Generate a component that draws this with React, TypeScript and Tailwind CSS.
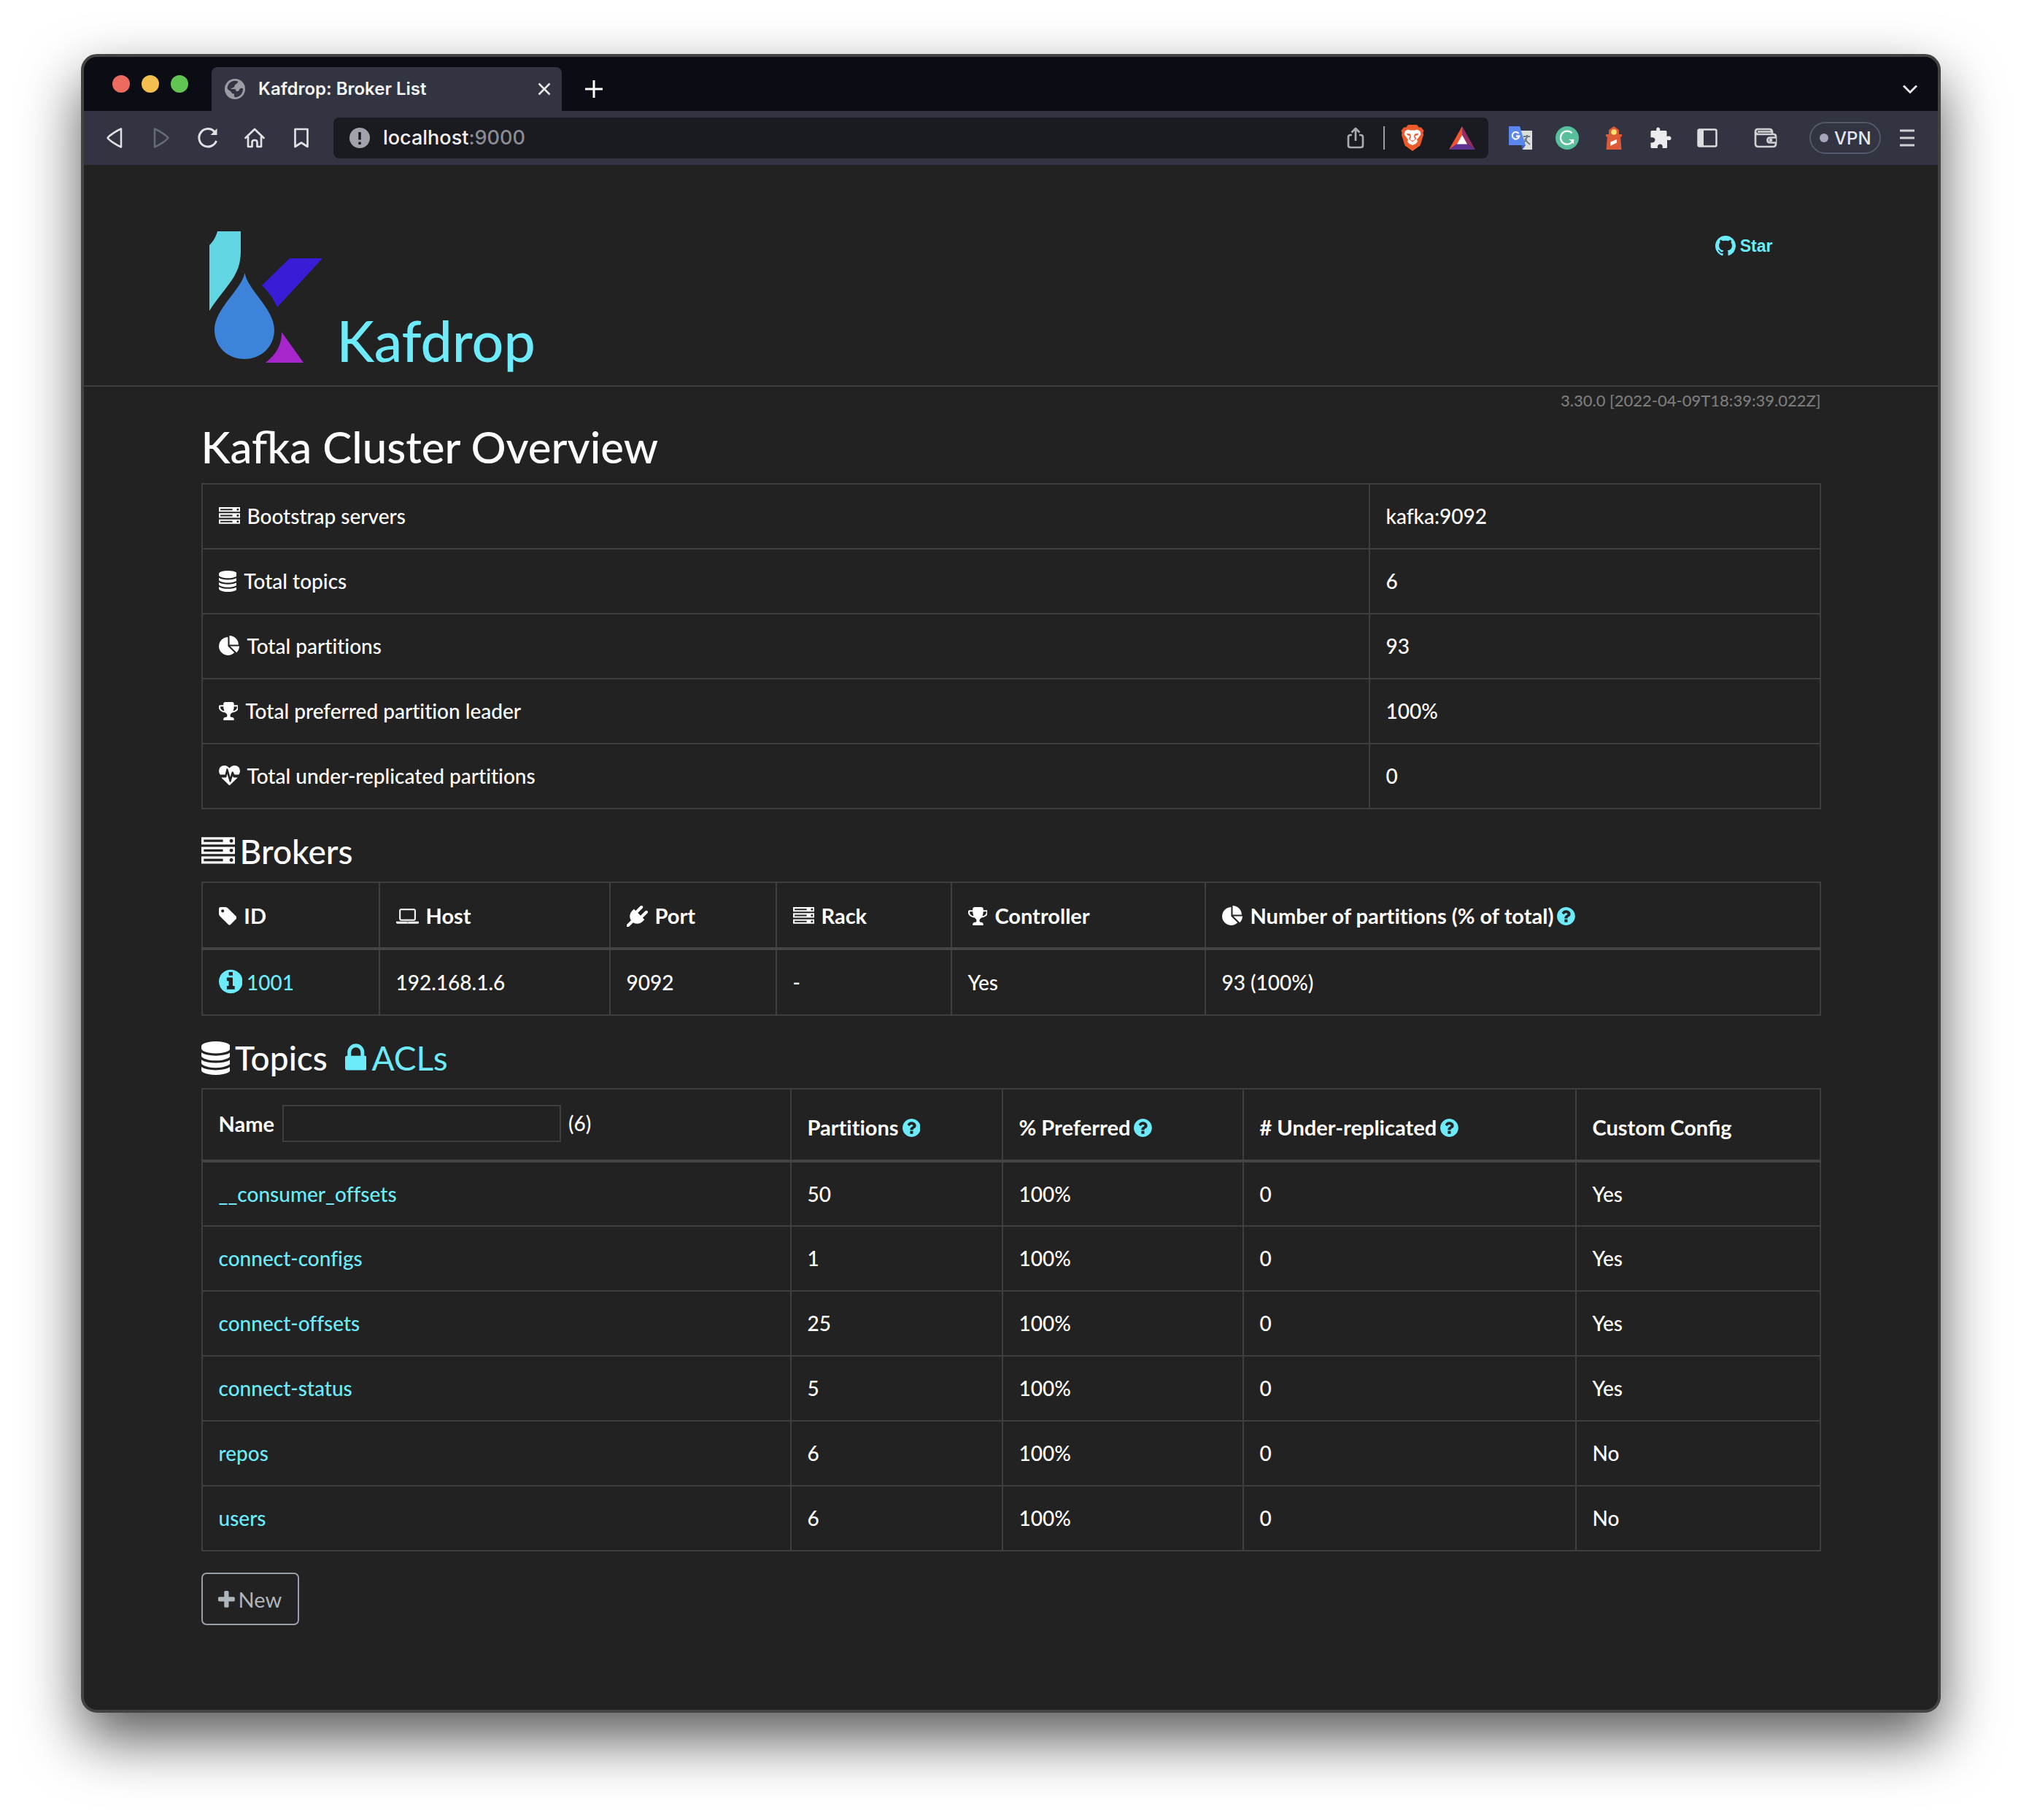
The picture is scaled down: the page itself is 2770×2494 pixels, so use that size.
import React from "react";

const glyphs = {
  server: {
    box: "0 0 1792 1792",
    d: "M128 1408h1024v-128h-1024v128zm0-512h1024v-128h-1024v128zm1568 448q0-40-28-68t-68-28-68 28-28 68 28 68 68 28 68-28 28-68zm-1568-960h1024v-128h-1024v128zm1568 448q0-40-28-68t-68-28-68 28-28 68 28 68 68 28 68-28 28-68zm0-512q0-40-28-68t-68-28-68 28-28 68 28 68 68 28 68-28 28-68zm96 832v384h-1792v-384h1792zm0-512v384h-1792v-384h1792zm0-512v384h-1792v-384h1792z",
  },
  database: {
    box: "128 0 1536 1792",
    d: "M896 768q237 0 443-43t325-127v170q0 69-103 128t-280 93.5-385 34.5-385-34.5-280-93.5-103-128v-170q119 84 325 127t443 43zm0 768q237 0 443-43t325-127v170q0 69-103 128t-280 93.5-385 34.5-385-34.5-280-93.5-103-128v-170q119 84 325 127t443 43zm0-384q237 0 443-43t325-127v170q0 69-103 128t-280 93.5-385 34.5-385-34.5-280-93.5-103-128v-170q119 84 325 127t443 43zm0-1152q208 0 385 34.5t280 93.5 103 128v128q0 69-103 128t-280 93.5-385 34.5-385-34.5-280-93.5-103-128v-128q0-69 103-128t280-93.5 385-34.5z",
  },
  pie: {
    box: "0 0 1792 1792",
    d: "M768 890l546 546q-106 108-247.5 168t-298.5 60q-209 0-385.5-103t-279.5-279.5-103-385.5 103-385.5 279.5-279.5 385.5-103v762zm187 6h773q0 157-60 298.5t-168 247.5zm709-128h-768v-768q209 0 385.5 103t279.5 279.5 103 385.5z",
  },
  trophy: {
    box: "64 0 1664 1792",
    d: "M522 883q-74-162-74-371h-256v96q0 78 94.5 162t235.5 113zm1078-275v-96h-256q0 209-74 371 141-29 235.5-113t94.5-162zm128-128v128q0 71-41.5 143t-112 130-173 97.5-215.5 44.5q-42 54-95 95-38 34-52.5 72.5t-14.5 89.5q0 54 30.5 91t97.5 37q75 0 133.5 45.5t58.5 114.5v64q0 14-9 23t-23 9h-832q-14 0-23-9t-9-23v-64q0-69 58.5-114.5t133.5-45.5q67 0 97.5-37t30.5-91q0-51-14.5-89.5t-52.5-72.5q-53-41-95-95-113-5-215.5-44.5t-173-97.5-112-130-41.5-143v-128q0-40 28-68t68-28h288v-96q0-66 47-113t113-47h576q66 0 113 47t47 113v96h288q40 0 68 28t28 68z",
  },
  heartbeat: {
    box: "0 0 1792 1792",
    d: "M1280 1024h305q-5 6-10 10.5t-9 7.5l-3 4-623 600q-18 18-44 18t-44-18l-624-602q-5-2-21-20h369q22 0 39.5-13.5t22.5-34.5l70-281 190 667q6 20 23 33t39 13q21 0 38-13t23-33l146-485 56 112q18 35 57 35zm512-556q0 145-103 300h-369l-111-221q-8-17-25.5-27t-36.5-8q-45 5-56 46l-129 430-196-686q-6-20-23.5-33t-39.5-13-39 13.5-22 34.5l-116 464h-423q-103-155-103-300 0-220 127-344t351-124q62 0 126.5 21.5t120 58 95.5 68.5 76 68q36-36 76-68t95.5-68.5 120-58 126.5-21.5q224 0 351 124t127 344z",
  },
  tag: {
    box: "128 0 1536 1792",
    d: "M576 448q0-53-37.5-90.5t-90.5-37.5-90.5 37.5-37.5 90.5 37.5 90.5 90.5 37.5 90.5-37.5 37.5-90.5zm1067 576q0 53-37 90l-491 492q-39 37-91 37-53 0-90-37l-715-716q-38-37-64.5-101t-26.5-117v-416q0-52 38-90t90-38h416q53 0 117 26.5t102 64.5l715 714q37 39 37 91z",
  },
  laptop: {
    box: "0 -128 1920 1792",
    d: "M416 1152q-66 0-113-47t-47-113v-704q0-66 47-113t113-47h1088q66 0 113 47t47 113v704q0 66-47 113t-113 47h-1088zm-32-864v704q0 13 9.5 22.5t22.5 9.5h1088q13 0 22.5-9.5t9.5-22.5v-704q0-13-9.5-22.5t-22.5-9.5h-1088q-13 0-22.5 9.5t-9.5 22.5zm1376 928h160v96q0 40-47 68t-113 28h-1600q-66 0-113-28t-47-68v-96h1760zm-720 96q16 0 16-16t-16-16h-160q-16 0-16 16t16 16h160z",
  },
  plug: {
    box: "0 0 1792 1792",
    d: "M1755 453q37 38 37 90.5t-37 90.5l-401 400 150 150-160 160q-163 163-389.5 186.5t-411.5-100.5l-362 362h-181v-181l362-362q-124-185-100.5-411.5t186.5-389.5l160-160 150 150 400-401q38-37 91-37t90 37 37 90.5-37 90.5l-400 401 234 234 401-400q38-37 91-37t90 37z",
  },
  info: {
    box: "128 0 1536 1792",
    d:
      "M1152 1376v-160q0-14-9-23t-23-9h-96v-512q0-14-9-23t-23-9h-320q-14 0-23 9t-9 23v160q0 14 9 23t23 9h96v320h-96q-14 0-23 9t-9 23v160q0 14 9 23t23 9h448q14 0 23-9t9-23zm-128-896v-160q0-14-9-23t-23-9h-192q-14 0-23 9t-9 23v160q0 14 9 23t23 9h192q14 0 23-9t9-23z" +
      "m640 416q0 209-103 385.5t-279.5 279.5-385.5 103-385.5-103-279.5-279.5-103-385.5 103-385.5 279.5-279.5 385.5-103 385.5 103 279.5 279.5 103 385.5z",
  },
  question: {
    box: "128 0 1536 1792",
    d:
      "M1024 1376v-192q0-14-9-23t-23-9h-192q-14 0-23 9t-9 23v192q0 14 9 23t23 9h192q14 0 23-9t9-23zm256-672q0-88-55.5-163t-138.5-116-170-41q-243 0-371 213-15 24 8 42l132 100q7 6 19 6 16 0 25-12 53-68 86-92 34-24 86-24 48 0 85.5 26t37.5 59q0 38-20 61t-68 45q-63 28-115.5 86.5t-52.5 125.5v36q0 14 9 23t23 9h192q14 0 23-9t9-23q0-19 21.5-49.5t54.5-49.5q32-18 49-28.5t46-35 44.5-48 28-60.5 12.5-81z" +
      "m384 192q0 209-103 385.5t-279.5 279.5-385.5 103-385.5-103-279.5-279.5-103-385.5 103-385.5 279.5-279.5 385.5-103 385.5 103 279.5 279.5 103 385.5z",
  },
  lock: {
    box: "320 0 1152 1792",
    d: "M640 768h512v-192q0-106-75-181t-181-75-181 75-75 181v192zm832 96v576q0 40-28 68t-68 28h-960q-40 0-68-28t-28-68v-576q0-40 28-68t68-28h32v-192q0-184 132-316t316-132 316 132 132 316v192h32q40 0 68 28t28 68z",
  },
  plus: {
    box: "192 0 1408 1792",
    d: "M1600 736v192q0 40-28 68t-68 28h-416v416q0 40-28 68t-68 28h-192q-40 0-68-28t-28-68v-416h-416q-40 0-68-28t-28-68v-192q0-40 28-68t68-28h416v-416q0-40 28-68t68-28h192q40 0 68 28t28 68v416h416q40 0 68 28t28 68z",
  },
};

type GlyphName = keyof typeof glyphs;

function Glyph({ name, className }: { name: GlyphName; className: string }) {
  return (
    <svg viewBox={glyphs[name].box} className={`inline-block w-auto ${className}`} fill="currentColor" aria-hidden="true">
      <path d={glyphs[name].d} />
    </svg>
  );
}

const CellIcon = ({ name }: { name: GlyphName }) => <Glyph name={name} className="mr-[10px] h-[29px] align-[-4px]" />;

const Help = ({ label }: { label: string }) => (
  <a href="#help" aria-label={label} className="ml-[5px] text-[#6debfa]">
    <Glyph name="question" className="h-[29px] align-[-4px]" />
  </a>
);

const line = "fill-none stroke-current";

function TitleBar() {
  return (
    <div className="flex h-[74px] items-end bg-[#0c0c15] pl-[39px] pr-6">
      <div className="flex h-[74px] items-center gap-4 pr-8">
        <button aria-label="Close window" className="size-6 rounded-full bg-[#ed6a5e]" />
        <button aria-label="Minimise window" className="size-6 rounded-full bg-[#f4bf4f]" />
        <button aria-label="Zoom window" className="size-6 rounded-full bg-[#61c554]" />
      </div>
      <div className="flex h-[60px] w-[480px] items-center rounded-t-lg bg-[#323541] pl-[18px] pr-3">
        <svg viewBox="0 0 28 28" className="size-7" aria-hidden="true">
          <circle cx="14" cy="14" r="14" fill="#9a9da3" />
          <path
            d="M9 4C12 2.500 16 2.500 18 3.500C18.500 6 16 6.500 14.500 8C13 9.500 14 11 12 12C10 13 9 12 8.500 14H13C15 14 15.500 15 15.500 17H18C20 17 19.500 14 21.500 13C23 12.500 25 13 25 14C25 20 21 24 16.500 25C12 26 13 23 13 20.500C10 21 9 18 8 17C6 16 4 15 3.500 12.500C4 8.500 6 5.500 9 4Z"
            fill="#323541"
          />
          <path d="M18 3.500C23 5.500 25 9 25 13C22 11 21 14 19 15C17 15.500 15 13 13.500 12.500C17 12 16 9 18 8C19.500 7 19 5 18 3.500Z" fill="#9a9da3" />
        </svg>
        <span className="ml-[18px] flex-1 whitespace-nowrap font-[Inter,sans-serif] text-[24px] font-semibold leading-7 text-[#f4f4f6]">Kafdrop: Broker List</span>
        <button aria-label="Close tab" className="flex size-6 items-center justify-center text-[#e8e8ea]">
          <svg viewBox="0 0 24 24" className={`size-6 stroke-[2.500] ${line}`}>
            <path d="M4.500 4.500L19.500 19.500M19.500 4.500L4.500 19.500" />
          </svg>
        </button>
      </div>
      <button aria-label="New tab" className="mx-8 flex h-[60px] w-6 items-center text-white">
        <svg viewBox="0 0 24 24" className={`size-6 stroke-3 ${line}`}>
          <path d="M12 0V24M0 12H24" />
        </svg>
      </button>
      <button aria-label="Search tabs" className="ml-auto flex h-[60px] w-7 items-center justify-center text-[#e4e4e6]">
        <svg viewBox="0 0 28 28" className={`size-7 stroke-3 ${line}`}>
          <path d="M5 9.500L14 18.500L23 9.500" />
        </svg>
      </button>
    </div>
  );
}

function ToolButton({ label, className = "text-[#e0e1e4]", children }: { label: string; className?: string; children: React.ReactNode }) {
  return (
    <button aria-label={label} className={`flex size-8 shrink-0 items-center justify-center ${className}`}>
      {children}
    </button>
  );
}

function Toolbar() {
  return (
    <div className="flex h-[74px] items-center bg-[#323541] pl-[26px] pr-[26px]">
      <div className="flex gap-8">
        <ToolButton label="Back">
          <svg viewBox="0 0 32 32" className={`size-8 stroke-[2.500] ${line}`} strokeLinejoin="round">
            <path d="M25 3.500V28.500C19 26 9 19.500 6.500 16C9 12.500 19 6 25 3.500Z" />
          </svg>
        </ToolButton>
        <ToolButton label="Forward" className="text-[#676a75]">
          <svg viewBox="0 0 32 32" className={`size-8 stroke-[2.500] ${line}`} strokeLinejoin="round">
            <path d="M7 3.500V28.500C13 26 23 19.500 25.500 16C23 12.500 13 6 7 3.500Z" />
          </svg>
        </ToolButton>
        <ToolButton label="Reload">
          <svg viewBox="0 0 32 32" className={`size-8 stroke-3 ${line}`}>
            <path d="M27.500 20A12.200 12.200 0 1 1 25 7.500" />
            <path d="M28.500 3V12H19.500Z" fill="currentColor" stroke="none" />
          </svg>
        </ToolButton>
        <ToolButton label="Home">
          <svg viewBox="0 0 32 32" className={`size-8 stroke-[2.700] ${line}`} strokeLinejoin="round" strokeLinecap="round">
            <path d="M3.500 16L16 4L28.500 16M7 14V28H12.500V22Q12.500 19 16 19T19.500 22V28H25V14" />
          </svg>
        </ToolButton>
        <ToolButton label="Bookmark">
          <svg viewBox="0 0 32 32" className={`size-8 stroke-[2.700] ${line}`} strokeLinejoin="round">
            <path d="M7.500 4H24.500V28L16 22.500L7.500 28Z" />
          </svg>
        </ToolButton>
      </div>
      <div className="ml-7 flex h-14 flex-1 items-center rounded-lg bg-[#1a1b20] pl-[22px] pr-4">
        <svg viewBox="0 0 28 28" className="size-7" aria-hidden="true">
          <circle cx="14" cy="14" r="14" fill="#a0a3ab" />
          <path d="M14 6V16.500M14 19.500V23" stroke="#1a1b20" strokeWidth="3.500" />
        </svg>
        <span className="ml-[18px] flex-1 font-[Inter,sans-serif] text-[27px] font-medium leading-8 text-[#f2f2f4]">
          localhost<span className="text-[#8b8c91]">:9000</span>
        </span>
        <ToolButton label="Share" className="text-[#a9abb1]">
          <svg viewBox="0 0 32 32" className={`size-8 stroke-[2.700] ${line}`} strokeLinejoin="round">
            <path d="M11 12H9Q6 12 6 15V26Q6 29 9 29H23Q26 29 26 26V15Q26 12 23 12H21M16 20V4M10.500 8.500L16 3L21.500 8.500" />
          </svg>
        </ToolButton>
        <span className="mx-[22px] h-8 w-[2px] bg-[#9c9da1]" />
        <ToolButton label="Brave Shields">
          <svg viewBox="0 0 32 36" className="h-9 w-8 shrink-0">
            <path d="M10 0H22L25 3.500H28L31.500 8L30.500 11L31 14L27 27Q26.500 28.500 25 29.500L16 36L7 29.500Q5.500 28.500 5 27L1 14L1.500 11L0.500 8L4 3.500H7Z" fill="#ec5a29" />
            <path d="M5.500 9L9.500 6.500L13 7.500H19L22.500 6.500L26.500 9L27.500 13L22 20.500L23 23L20.500 26L16 28L11.500 26L9 23L10 20.500L4.500 13Z" fill="#fff" />
            <path d="M7.500 12L13 12.500L14 16L12.500 20L16 22L19.500 20L18 16L19 12.500L24.500 12L22.500 14.500L19.500 15L21 19.500L16 23.500L11 19.500L12.500 15L9.500 14.500Z" fill="#ec5a29" />
          </svg>
        </ToolButton>
        <ToolButton label="Brave Rewards" className="ml-9 mr-1">
          <svg viewBox="0 0 36 32" className="h-8 w-9 shrink-0">
            <path d="M18 0L0 32L12 24L18 13Z" fill="#f0532f" />
            <path d="M18 0L36 32L25 24L18 13Z" fill="#952b63" />
            <path d="M0 32H36L25 24H11Z" fill="#5d3494" />
            <path d="M18 12L25 24.500H11Z" fill="#fff" />
          </svg>
        </ToolButton>
      </div>
      <div className="ml-7 flex items-center gap-8">
        <ToolButton label="Translate">
          <svg viewBox="0 0 32 32" className="size-8">
            <path d="M15 6H32V32H19Z" fill="#dcdddd" />
            <path d="M20 14H29M25 12V14C24 18 22 21 20 22M22 17C24 21 26 23 29 25" stroke="#6a7b80" strokeWidth="2" fill="none" />
            <path d="M17 26H23L18.500 32Z" fill="#3c5bc0" />
            <path d="M1 0H15L23 26H1Q0 26 0 25V1Q0 0 1 0Z" fill="#5a87ee" />
            <path d="M13.500 10A4.800 4.800 0 1 0 14.300 13.500H10" stroke="#f0f3fc" strokeWidth="2.300" fill="none" />
          </svg>
        </ToolButton>
        <ToolButton label="Grammarly">
          <svg viewBox="0 0 32 32" className="size-8">
            <circle cx="16" cy="16" r="16" fill="#57bf9c" />
            <path d="M22.500 9.500A9 9 0 1 0 24.500 18.500" stroke="#fff" strokeWidth="2.300" fill="none" />
            <path d="M18 18H25V25L22.500 21Z" fill="#fff" />
          </svg>
        </ToolButton>
        <ToolButton label="Lighthouse">
          <svg viewBox="0 0 32 32" className="size-8">
            <path d="M16 0L23 5V11H27V14.500H25L26.500 32H5.500L7 14.500H5V11H9V5Z" fill="#dd5a36" />
            <circle cx="16" cy="8" r="3.800" fill="#fbe36f" />
            <path d="M11.500 21.500L20 18V22.500L11 27Z" fill="#fff" />
          </svg>
        </ToolButton>
        <ToolButton label="Extensions">
          <svg viewBox="0 0 32 32" className="size-8" fill="#ececee">
            <path d="M4 6H10.500C9.500 3 11 1.500 12.500 1.500S16 3 15 6H23Q24.500 6 24.500 7.500V14C28 12.500 30.500 14 30.500 16.500S28 20 25 18.500V29Q25 30 24 30H18.500C19.500 26 17.500 24.500 15.500 24.500S11 26 12 30H4Q2.500 30 2.500 28.500V22.500C6.500 23 8.500 21 8.500 18.500S6 14.500 2.500 15.500V7.500Q2.500 6 4 6Z" />
          </svg>
        </ToolButton>
        <ToolButton label="Sidebar">
          <svg viewBox="0 0 32 32" className="size-8">
            <rect x="3.500" y="4.500" width="25" height="23" rx="2" fill="none" stroke="#dcdde0" strokeWidth="2.500" />
            <path d="M3 4H11V28H3Z" fill="#dcdde0" />
          </svg>
        </ToolButton>
      </div>
      <ToolButton label="Wallet" className="ml-12 text-[#d0d1d5]">
        <svg viewBox="0 0 32 32" className={`size-8 stroke-[2.700] ${line}`} strokeLinejoin="round">
          <path d="M25 11V8Q25 4 21 4H5Q2 4 2 8V24Q2 28 6 28H26Q30 28 30 24V14Q30 11 27 11H6Q3 11 2 8M5 7.500H24" />
          <path d="M30 15.500H22Q18.500 15.500 18.500 19T22 22.500H30" fill="#323541" />
          <circle cx="23" cy="19" r="1" fill="currentColor" />
        </svg>
      </ToolButton>
      <button className="ml-11 flex h-11 w-[98px] items-center gap-2 rounded-full border-2 border-[#55586a] pl-3 font-[Inter,sans-serif] text-[24px] font-medium text-[#e7e6f2]">
        <span className="size-3 rounded-full bg-[#a5a6bb]" />
        VPN
      </button>
      <ToolButton label="Menu" className="ml-5 text-[#cfd0d4]">
        <svg viewBox="0 0 32 32" className={`size-8 stroke-3 ${line}`}>
          <path d="M6 6H26M6 16H26M6 26H26" />
        </svg>
      </ToolButton>
    </div>
  );
}

const link = "text-[#6debfa]";
const table = "w-full table-fixed border-collapse text-left";
const cell = "h-[89px] border-2 border-[#3e3e3e] px-[22px] py-0 text-[28px] font-medium [font-variant-ligatures:no-common-ligatures]";
const brokerCell = "h-[91px] border-2 border-[#3e3e3e] px-[22px] py-0 whitespace-nowrap [font-variant-ligatures:no-common-ligatures]";
const topicHead = "border-2 border-[#3e3e3e] px-[22px] pb-[24px]";

const summary: { icon: GlyphName; label: string; value: string }[] = [
  { icon: "server", label: "Bootstrap servers", value: "kafka:9092" },
  { icon: "database", label: "Total topics", value: "6" },
  { icon: "pie", label: "Total partitions", value: "93" },
  { icon: "trophy", label: "Total preferred partition leader", value: "100%" },
  { icon: "heartbeat", label: "Total under-replicated partitions", value: "0" },
];

const topics = [
  { name: "__consumer_offsets", partitions: 50, custom: "Yes" },
  { name: "connect-configs", partitions: 1, custom: "Yes" },
  { name: "connect-offsets", partitions: 25, custom: "Yes" },
  { name: "connect-status", partitions: 5, custom: "Yes" },
  { name: "repos", partitions: 6, custom: "No" },
  { name: "users", partitions: 6, custom: "No" },
];

function SiteHeader() {
  return (
    <header className="h-[304px] border-b-2 border-[#3e3e3e]">
      <div className="mx-auto flex max-w-[2220px] items-start justify-between pt-[91px]">
        <a href="#home" className={`flex items-end pl-[11px] ${link}`}>
          <svg viewBox="0 0 155 180" className="h-[180px] w-[155px]" aria-hidden="true">
            <path d="M11 0H43V27C43 62 24 72 0 109V19C6 13 9 7 11 0Z" fill="#62d5e3" />
            <path d="M48.500 57C52 80 89 106 89 135C89 158 71 175 48 175S7 158 7 135C7 106 44 80 48.500 57Z" fill="#3c83d9" />
            <path d="M110 37H155L93 104C88 92 80 82 72 74Z" fill="#391dd6" />
            <path d="M99 138L129 180H77C92 168 99 156 99 138Z" fill="#a726cc" />
          </svg>
          <span className="ml-5 text-[77px] font-medium leading-[62px]">Kafdrop</span>
        </a>
        <a href="#star" className={`mr-[66px] mt-1 flex items-center gap-[6px] font-['Liberation_Sans',sans-serif] text-[23px] font-bold leading-8 ${link}`}>
          <svg viewBox="0 0 16 16" className="size-7" fill="currentColor" aria-hidden="true">
            <path d="M8 0C3.580 0 0 3.580 0 8c0 3.540 2.290 6.530 5.470 7.590.4.070.55-.17.55-.38 0-.19-.01-.82-.01-1.490-2.010.37-2.530-.49-2.690-.94-.09-.23-.48-.94-.82-1.130-.28-.15-.68-.52-.01-.53.63-.01 1.080.58 1.230.82.72 1.210 1.870.87 2.330.66.07-.52.28-.87.51-1.070-1.780-.2-3.640-.89-3.640-3.950 0-.87.31-1.590.82-2.150-.08-.2-.36-1.020.08-2.120 0 0 .67-.21 2.200.82.64-.18 1.320-.27 2-.27.68 0 1.360.09 2 .27 1.530-1.040 2.200-.82 2.200-.82.44 1.100.16 1.920.08 2.120.51.56.82 1.270.82 2.150 0 3.070-1.870 3.750-3.650 3.950.29.25.54.73.54 1.480 0 1.070-.01 1.930-.01 2.200 0 .21.15.46.55.38A8.013 8.013 0 0 0 16 8c0-4.420-3.580-8-8-8z" />
          </svg>
          Star
        </a>
      </div>
    </header>
  );
}

export default function App() {
  return (
    <div className="min-h-screen bg-white pb-[146px] pl-[111px] pr-[110px] pt-[74px]">
      <div className="overflow-hidden rounded-[22px] border-4 border-[#434343] bg-[#222222] font-[Lato,sans-serif] text-[29px] leading-[41px] text-white shadow-[0_36px_80px_rgba(0,0,0,0.65)]">
        <TitleBar />
        <Toolbar />
        <SiteHeader />
        <main className="mx-auto max-w-[2220px] pb-[116px]">
          <p className="pt-[3px] text-right text-[22px] font-medium leading-[32px] text-[#7c7c7c]">3.30.0 [2022-04-09T18:39:39.022Z]</p>
          <h1 className="mt-[12px] text-[60px] font-medium leading-[70px]">Kafka Cluster Overview</h1>
          <table className={`mt-[15px] ${table}`}>
            <colgroup>
              <col />
              <col className="w-[618px]" />
            </colgroup>
            <tbody>
              {summary.map((row) => (
                <tr key={row.label}>
                  <td className={cell}>
                    <CellIcon name={row.icon} />
                    {row.label}
                  </td>
                  <td className={cell}>{row.value}</td>
                </tr>
              ))}
            </tbody>
          </table>

          <h2 className="mt-[31px] text-[46px] font-medium leading-[54px]">
            <Glyph name="server" className="mr-[7px] h-[46px] align-[-6px]" />
            Brokers
          </h2>
          <table className={`mt-[14px] ${table}`}>
            <colgroup>
              <col className="w-[243px]" />
              <col className="w-[316px]" />
              <col className="w-[228px]" />
              <col className="w-[240px]" />
              <col className="w-[348px]" />
              <col />
            </colgroup>
            <thead>
              <tr className="border-b-4 border-[#444444]">
                <th className={brokerCell}><CellIcon name="tag" />ID</th>
                <th className={brokerCell}><CellIcon name="laptop" />Host</th>
                <th className={brokerCell}><CellIcon name="plug" />Port</th>
                <th className={brokerCell}><CellIcon name="server" />Rack</th>
                <th className={brokerCell}><CellIcon name="trophy" />Controller</th>
                <th className={brokerCell}>
                  <CellIcon name="pie" />
                  Number of partitions (% of total)
                  <Help label="About partition counts" />
                </th>
              </tr>
            </thead>
            <tbody className="text-[28px] font-medium">
              <tr>
                <td className={brokerCell}>
                  <a href="#broker-1001" className={link}>
                    <Glyph name="info" className="mr-[6px] h-[38px] align-[-7px]" />
                    1001
                  </a>
                </td>
                <td className={brokerCell}>192.168.1.6</td>
                <td className={brokerCell}>9092</td>
                <td className={brokerCell}>-</td>
                <td className={brokerCell}>Yes</td>
                <td className={brokerCell}>93 (100%)</td>
              </tr>
            </tbody>
          </table>

          <h2 className="mt-[31px] text-[46px] font-medium leading-[54px]">
            <Glyph name="database" className="mr-[7px] h-[46px] align-[-6px]" />
            Topics
            <a href="#acls" className={`ml-[24px] font-normal ${link}`}>
              <Glyph name="lock" className="mr-[7px] h-[46px] align-[-6px]" />
              ACLs
            </a>
          </h2>
          <table className={`mt-[14px] ${table}`}>
            <colgroup>
              <col className="w-[807px]" />
              <col className="w-[290px]" />
              <col className="w-[330px]" />
              <col className="w-[456px]" />
              <col />
            </colgroup>
            <thead>
              <tr className="h-[99px] border-b-4 border-[#444444] align-bottom">
                <th className={topicHead}>
                  <div className="flex items-center">
                    <label htmlFor="topic-filter">Name</label>
                    <input id="topic-filter" type="text" className="ml-[11px] mr-[10px] h-[51px] w-[382px] border-2 border-[#3e3e3e] bg-transparent px-2 outline-none" />
                    <span className="text-[28px] font-medium">(6)</span>
                  </div>
                </th>
                <th className={`${topicHead} [font-variant-ligatures:no-common-ligatures]`}>Partitions<Help label="About partitions" /></th>
                <th className={topicHead}>% Preferred<Help label="About preferred leaders" /></th>
                <th className={topicHead}># Under-replicated<Help label="About under-replication" /></th>
                <th className={topicHead}>Custom Config</th>
              </tr>
            </thead>
            <tbody>
              {topics.map((topic) => (
                <tr key={topic.name}>
                  <td className={cell}><a href={`#${topic.name}`} className={link}>{topic.name}</a></td>
                  <td className={cell}>{topic.partitions}</td>
                  <td className={cell}>100%</td>
                  <td className={cell}>0</td>
                  <td className={cell}>{topic.custom}</td>
                </tr>
              ))}
            </tbody>
          </table>
          <button className="mt-[29px] h-[72px] w-[134px] rounded-[7px] border-2 border-[#999fa8] text-[#adb5bd]">
            <Glyph name="plus" className="mr-[5px] h-[29px] align-[-4px]" />
            New
          </button>
        </main>
      </div>
    </div>
  );
}
